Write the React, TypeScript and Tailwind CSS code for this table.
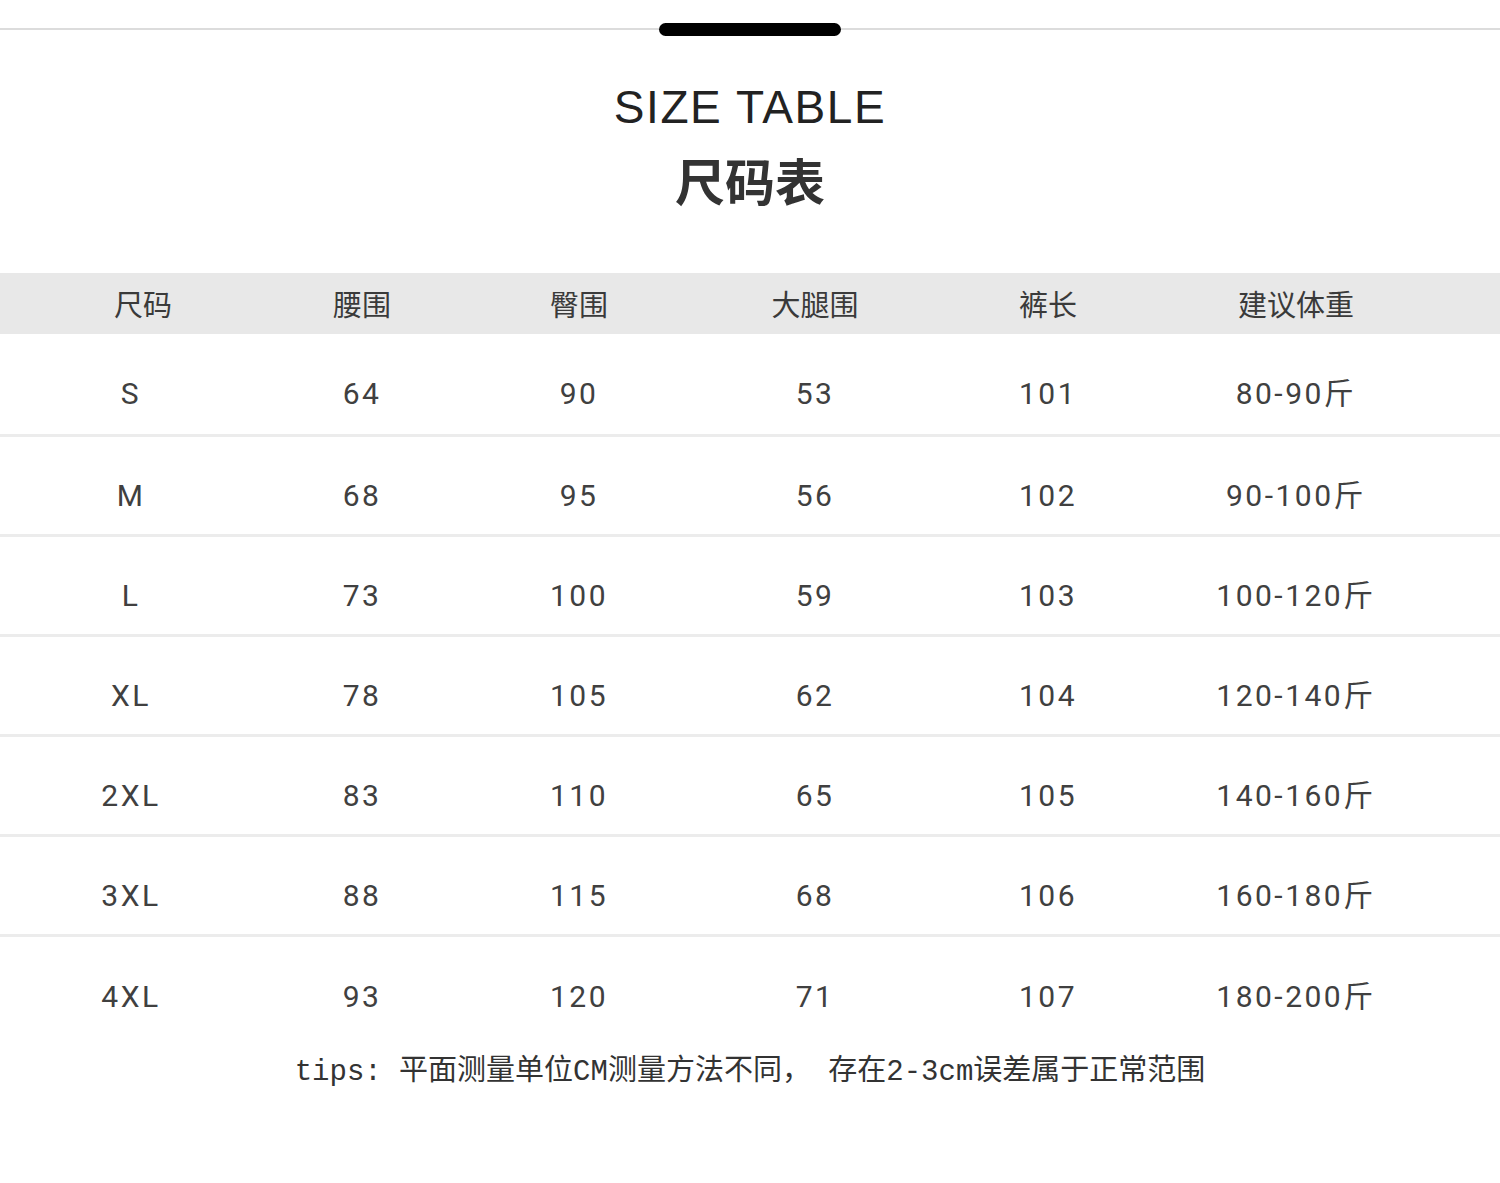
const headers = ["尺码", "腰围", "臀围", "大腿围", "裤长", "建议体重"];

const rows = [
  ["S", "64", "90", "53", "101", "80-90斤"],
  ["M", "68", "95", "56", "102", "90-100斤"],
  ["L", "73", "100", "59", "103", "100-120斤"],
  ["XL", "78", "105", "62", "104", "120-140斤"],
  ["2XL", "83", "110", "65", "105", "140-160斤"],
  ["3XL", "88", "115", "68", "106", "160-180斤"],
  ["4XL", "93", "120", "71", "107", "180-200斤"],
];

const cols = "grid grid-cols-[262px_200px_234px_238px_228px_268px_1fr]";
const cjk = "font-['Noto_Sans_CJK_SC',sans-serif]";
const num = "font-['Roboto','Noto_Sans_CJK_SC',sans-serif]";

export default function App() {
  return (
    <div className="w-[1500px] min-h-[1183px] bg-white flex flex-col">
      {/* top handle */}
      <div className="h-[58px] flex items-center">
        <div className="flex-1 h-[2px] bg-[#dcdcdc]" />
        <div className="w-[182px] h-[13px] rounded-full bg-black" />
        <div className="flex-1 h-[2px] bg-[#dcdcdc]" />
      </div>

      <div className="mt-[26px] text-center text-[46px] leading-none tracking-[1.6px] text-[#222] font-['Liberation_Sans',sans-serif]">
        SIZE TABLE
      </div>
      <div className={`mt-[24px] text-center text-[50px] leading-none font-bold text-[#333] ${cjk}`}>
        尺码表
      </div>

      {/* table */}
      <div className={`mt-[69px] h-[61px] bg-[#e8e8e8] items-center ${cols}`}>
        {headers.map((h, i) => (
          <div
            key={h}
            className={`text-center text-[29px] leading-none text-[#3a3a3a] ${cjk} ${i === 0 ? "pl-[24px]" : ""}`}
          >
            {h}
          </div>
        ))}
      </div>

      {rows.map((r, ri) => (
        <div
          key={r[0]}
          className={`${cols} items-center pt-[20px] ${ri === 0 ? "h-[103px]" : "h-[100px]"} ${
            ri < rows.length - 1 ? "border-b-[3px] border-[#ececec]" : ""
          }`}
        >
          {r.map((c, ci) => (
            <div
              key={ci}
              className={`text-center text-[30px] leading-none tracking-[2.5px] text-[#404040] ${num}`}
            >
              {c}
            </div>
          ))}
        </div>
      ))}

      <div className="mt-[21px] text-center text-[29px] leading-none text-[#333] font-['Liberation_Mono','Noto_Sans_CJK_SC',monospace]">
        tips: 平面测量单位CM测量方法不同， 存在2-3cm误差属于正常范围
      </div>
    </div>
  );
}
